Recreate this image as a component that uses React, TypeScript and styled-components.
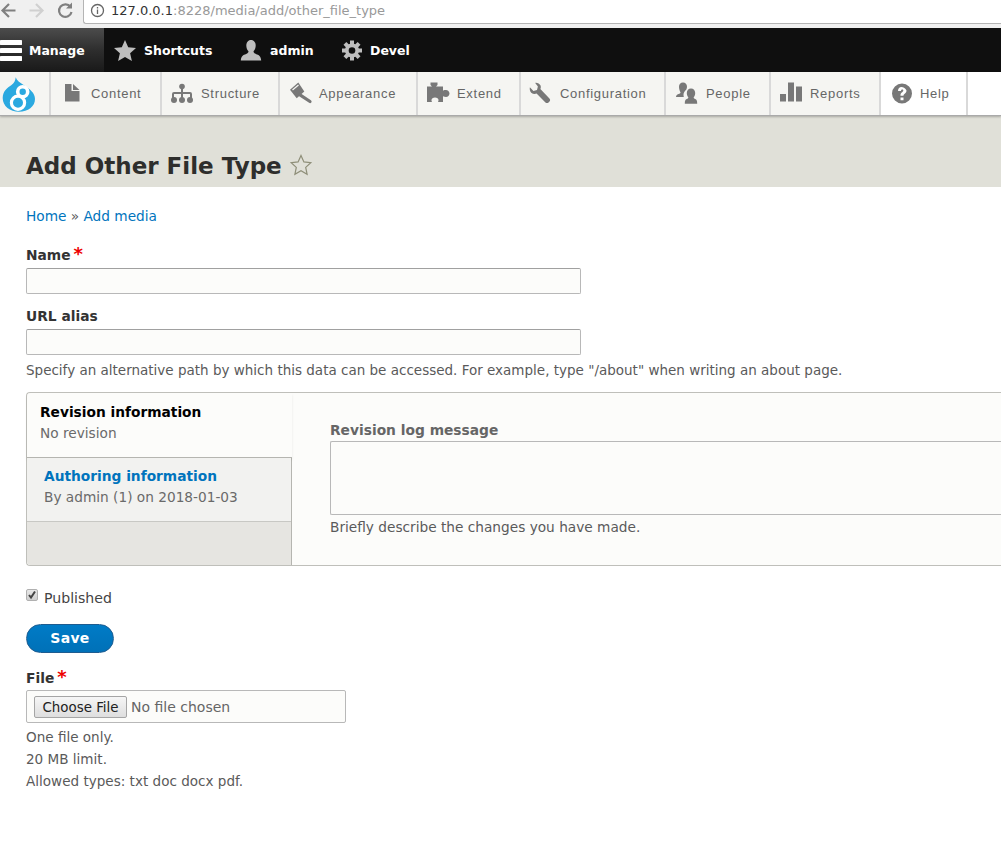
import React from "react";
import styled, { createGlobalStyle } from "styled-components";

const Global = createGlobalStyle`
  html, body {
    margin: 0;
    padding: 0;
    background: #fff;
    overflow: hidden;
  }
  body {
    width: 1001px;
    height: 855px;
    font-family: "DejaVu Sans", sans-serif;
    font-size: 14px;
    color: #5a5a5a;
  }
`;

const BrowserBar = styled.div`
  height: 28px;
  display: flex;
  background: #f0f0f0;
`;

const NavButtons = styled.div`
  width: 83px;
  height: 20px;
  padding-bottom: 3px;
  flex: none;
  display: flex;
  align-items: center;
  gap: 9px;
`;

const NavIcon = styled.svg<{ $off?: boolean }>`
  width: 19px;
  height: 19px;
  fill: none;
  stroke: ${p => (p.$off ? "#d0d0d0" : "#808080")};
  stroke-width: 2.2;
`;

const AddressBox = styled.div`
  flex: 1;
  height: 21px;
  padding: 0 0 2px 6px;
  background: #fff;
  border-left: 1px solid #b4b4b4;
  border-bottom: 1px solid #b4b4b4;
  border-bottom-left-radius: 3px;
  display: flex;
  align-items: center;
  gap: 6px;
  font-size: 13px;
  color: #999;
`;

const Host = styled.span`
  color: #333;
`;

const BlackBar = styled.div`
  height: 44px;
  background: #0f0f0f;
  display: flex;
  align-items: stretch;
  color: #fff;
  font-weight: bold;
  font-size: 12.5px;
`;

const BarTab = styled.div<{ $w: number; $active?: boolean }>`
  width: ${p => p.$w}px;
  display: flex;
  align-items: center;
  flex: none;
  background: ${p =>
    p.$active ? "linear-gradient(180deg, #4c4c4c 0%, #2e2e2e 50%, #191919 100%)" : "none"};
`;

const BarIcon = styled.svg<{ $gap: number; $left: number }>`
  width: 22px;
  height: 24px;
  margin-left: ${p => p.$left}px;
  margin-right: ${p => p.$gap}px;
  fill: #bebebe;
  flex: none;
`;

const Tray = styled.div`
  height: 43px;
  display: flex;
  background: #fff;
  border-bottom: 1px solid #aaa;
  box-shadow: 0 1px 2px rgba(0, 0, 0, 0.25);
  position: relative;
`;

const TrayTab = styled.div<{ $w: number; $white?: boolean }>`
  width: ${p => p.$w}px;
  flex: none;
  box-sizing: border-box;
  height: 43px;
  display: flex;
  align-items: center;
  background: ${p => (p.$white ? "#fff" : "#f5f5f2")};
  border-right: 2px solid #d9d9d9;
  font-family: "Liberation Sans", Arial, sans-serif;
  font-size: 13px;
  letter-spacing: 0.7px;
  color: #666;
`;

const Logo = styled.svg`
  width: 34px;
  height: 36px;
  margin-left: 2px;
`;

const TrayIcon = styled.svg<{ $left: number; $gap: number }>`
  width: 24px;
  height: 24px;
  margin-left: ${p => p.$left}px;
  margin-right: ${p => p.$gap}px;
  fill: #787878;
  flex: none;
`;

const Header = styled.div`
  height: 71px;
  box-sizing: border-box;
  background: #e0e0d8;
  padding: 36px 26px 0;
  display: flex;
  align-items: flex-start;
  gap: 7px;
`;

const Title = styled.h1`
  margin: 0;
  font-size: 23px;
  line-height: 29px;
  font-weight: bold;
  color: #2e2e2c;
`;

const StarIcon = styled.svg`
  width: 24px;
  height: 24px;
  margin-top: 1px;
  fill: none;
  stroke: #8e8e78;
  stroke-width: 1.2;
`;

const Main = styled.div`
  padding: 20px 0 0 26px;
`;

const Crumbs = styled.div`
  font-size: 13.7px;
  line-height: 18px;
`;

const Crumb = styled.a`
  color: #0074bd;
`;

const Label = styled.label<{ $top: number; $muted?: boolean }>`
  display: block;
  margin-top: ${p => p.$top}px;
  font-size: 13.8px;
  line-height: 18px;
  font-weight: bold;
  color: ${p => (p.$muted ? "#666" : "#333")};
`;

const Required = styled.span`
  color: #e00;
  font-size: 18px;
  line-height: 14px;
  margin-left: 3px;
  font-weight: bold;
`;

const TextInput = styled.div`
  box-sizing: border-box;
  width: 555px;
  height: 26px;
  margin-top: 4px;
  background: #fcfcfa;
  border: 1px solid #b8b8b8;
  border-top-color: #a0a0a0;
  border-radius: 2px;
`;

const Help = styled.div<{ $top?: number; $size?: number }>`
  margin-top: ${p => p.$top ?? 6}px;
  font-size: ${p => p.$size ?? 13.5}px;
  line-height: 18px;
`;

const Tabs = styled.div`
  box-sizing: border-box;
  height: 174px;
  margin-top: 13px;
  display: flex;
  background: #fcfcfa;
  border: 1px solid #bfbfba;
  border-right: none;
  border-radius: 4px 0 0 4px;
`;

const TabMenu = styled.div`
  box-sizing: border-box;
  width: 265px;
  flex: none;
  background: #e6e5e1;
  border-right: 1px solid #b5b5b0;
  border-radius: 4px 0 0 4px;
`;

const ActiveTab = styled.div`
  height: 65px;
  width: 265px;
  box-sizing: border-box;
  padding: 10px 13px;
  background: #fcfcfa;
  border-radius: 4px 0 0 0;
  border-bottom: 1px solid #b5b5b0;
  box-shadow: 0 2px 3px rgba(0, 0, 0, 0.08);
`;

const IdleTab = styled.div`
  height: 64px;
  box-sizing: border-box;
  padding: 9px 17px;
  background: #f2f2f0;
  border-bottom: 1px solid #c8c8c4;
`;

const TabTitle = styled.div<{ $link?: boolean }>`
  font-size: 13.75px;
  line-height: 18px;
  font-weight: bold;
  color: ${p => (p.$link ? "#0074bd" : "#000")};
`;

const TabSub = styled.div`
  margin-top: 3px;
  font-size: 13.7px;
  line-height: 18px;
  color: #6a6a6a;
`;

const TabPane = styled.div`
  flex: 1;
  padding: 28px 0 0 38px;
`;

const TextArea = styled.div`
  box-sizing: border-box;
  height: 74px;
  margin-top: 2px;
  background: #fcfcfa;
  border: 1px solid #b8b8b8;
  border-right: none;
  border-radius: 2px 0 0 2px;
`;

const CheckRow = styled.div`
  margin-top: 23px;
  display: flex;
  align-items: center;
  gap: 6px;
  height: 18px;
  font-size: 14.1px;
  color: #444;
`;

const Check = styled.span`
  width: 12px;
  height: 12px;
  margin-top: -6px;
  flex: none;
  box-sizing: border-box;
  border: 1px solid #b0b0b0;
  border-radius: 2px;
  background: linear-gradient(180deg, #e8e8e8, #cfcfcf);
  display: flex;
`;

const SaveButton = styled.button`
  display: block;
  box-sizing: border-box;
  width: 88px;
  height: 29px;
  margin-top: 17px;
  padding: 0 0 2px;
  border: 1px solid #1e5c90;
  border-radius: 20px;
  background: linear-gradient(180deg, #007bc6, #0071b8);
  color: #fff;
  font-family: "DejaVu Sans", sans-serif;
  font-size: 14px;
  font-weight: bold;
  letter-spacing: 0.3px;
`;

const FileBox = styled.div`
  box-sizing: border-box;
  width: 320px;
  height: 33px;
  margin-top: 3px;
  padding: 0 7px;
  display: flex;
  align-items: center;
  gap: 4px;
  background: #fcfcfa;
  border: 1px solid #b8b8b8;
  border-radius: 2px;
  font-size: 14px;
  color: #666;
`;

const ChooseButton = styled.div`
  box-sizing: border-box;
  width: 93px;
  height: 22px;
  padding-top: 1px;
  display: flex;
  align-items: center;
  justify-content: center;
  background: linear-gradient(180deg, #f6f6f6, #dedede);
  border: 1px solid #a5a5a5;
  border-radius: 2px;
  font-size: 13.4px;
  color: #222;
`;

const Notes = styled.div`
  margin-top: 3px;
  font-size: 13.55px;
  line-height: 22px;
`;

const GEAR_TEETH = [0, 45, 90, 135, 180, 225, 270, 315];

const App: React.FC = () => {
  return (
    <>
      <Global />
      <BrowserBar>
        <NavButtons>
          <NavIcon viewBox="0 0 19 19">
            <path d="M15.500 9.500H2.500M9 3L2.500 9.500 9 16" />
          </NavIcon>
          <NavIcon viewBox="0 0 19 19" $off>
            <path d="M1.500 9.500h13M8 3l6.500 6.500L8 16" />
          </NavIcon>
          <NavIcon viewBox="0 0 19 19">
            <path d="M14.500 6A6.300 6.300 0 1 0 15.500 11" />
            <path d="M16 1.500v6h-6z" fill="#808080" stroke="none" />
          </NavIcon>
        </NavButtons>
        <AddressBox>
          <svg width="15" height="15" viewBox="0 0 15 15" fill="none" stroke="#666" strokeWidth="1.3">
            <circle cx="7.500" cy="7.500" r="6" />
            <path d="M7.500 6.500v4.500M7.500 4v1.500" />
          </svg>
          <span>
            <Host>127.0.0.1</Host>:8228/media/add/other_file_type
          </span>
        </AddressBox>
      </BrowserBar>

      <BlackBar>
        <BarTab $w={104} $active>
          <BarIcon $left={0} $gap={7} viewBox="0 0 22 24">
            <path
              fill="#fff"
              d="M1.500 2h19a2.500 2.500 0 0 1 0 5h-19a2.500 2.500 0 0 1 0-5zM1.500 10h19a2.500 2.500 0 0 1 0 5h-19a2.500 2.500 0 0 1 0-5zM1.500 18h19a2.500 2.500 0 0 1 0 5h-19a2.500 2.500 0 0 1 0-5z"
            />
          </BarIcon>
          Manage
        </BarTab>
        <BarTab $w={136}>
          <BarIcon $left={10} $gap={8} viewBox="0 0 22 24">
            <path d="M11 2l3.200 7.300 7.800.7-5.900 5.200 1.800 7.800-6.900-4.100-6.900 4.100 1.800-7.800L0 10l7.800-.7z" />
          </BarIcon>
          Shortcuts
        </BarTab>
        <BarTab $w={101}>
          <BarIcon $left={0} $gap={8} viewBox="0 0 22 24">
            <path d="M11 2c3 0 4.700 2.500 4.700 5.500 0 2.500-1 4.600-2.200 5.800.1 1.400.7 2 2.400 2.600 3 1 4.900 2 5.300 6.600H.8c.4-4.600 2.300-5.600 5.300-6.600 1.700-.6 2.300-1.200 2.400-2.600C7.300 12.100 6.300 10 6.300 7.500 6.300 4.500 8 2 11 2z" />
          </BarIcon>
          admin
        </BarTab>
        <BarTab $w={100}>
          <BarIcon $left={0} $gap={7} viewBox="0 0 22 24">
            {GEAR_TEETH.map(a => (
              <rect key={a} x="9" y="2.500" width="4" height="5" transform={`rotate(${a} 11 12.500)`} />
            ))}
            <circle cx="11" cy="12.500" r="7" />
            <circle cx="11" cy="12.500" r="3.300" fill="#0f0f0f" />
          </BarIcon>
          Devel
        </BarTab>
      </BlackBar>

      <Tray>
        <TrayTab $w={51}>
          <Logo viewBox="0 0 34 36">
            <path
              fill="#2ba9e0"
              d="M13.700 1.200c1 3.500 4 5 8.300 8C27.500 13 33 16.500 33 23c0 7.500-7 12.800-16 12.800S.7 30 .7 22C.7 14.500 6 11.500 9.500 9c2.500-2 4-4.500 4.200-7.800z"
            />
            <circle cx="20.700" cy="15.800" r="5" fill="#2ba9e0" stroke="#fff" strokeWidth="3.600" />
            <circle cx="16" cy="26.800" r="6.600" fill="#2ba9e0" stroke="#fff" strokeWidth="3.200" />
          </Logo>
        </TrayTab>
        <TrayTab $w={111}>
          <TrayIcon $left={12} $gap={4} viewBox="0 0 24 24">
            <path d="M2 2h6.500v7h8v10.500H2zM10 2l6.500 6H10z" />
          </TrayIcon>
          Content
        </TrayTab>
        <TrayTab $w={118}>
          <TrayIcon $left={9} $gap={6} viewBox="0 0 24 24">
            <circle cx="11" cy="4.500" r="2.800" />
            <circle cx="3" cy="18" r="3" />
            <circle cx="11" cy="18" r="3" />
            <circle cx="19" cy="18" r="3" />
            <path d="M10 6h2v4h7a2 2 0 0 1 2 2v4h-2v-4h-7v4h-2v-4H3v4H1v-4a2 2 0 0 1 2-2h7z" />
          </TrayIcon>
          Structure
        </TrayTab>
        <TrayTab $w={138}>
          <TrayIcon $left={9} $gap={6} viewBox="0 0 24 24">
            <path d="M1 7.800L9.300.5l6 9-7.600 6.700z" />
            <path d="M3.500 8l6-5" stroke="#f5f5f2" strokeWidth="1.200" fill="none" />
            <path d="M11 12.800l10 6.700" stroke="#787878" strokeWidth="3.200" fill="none" strokeLinecap="round" />
          </TrayIcon>
          Appearance
        </TrayTab>
        <TrayTab $w={103}>
          <TrayIcon $left={9} $gap={6} viewBox="0 0 24 24">
            <path d="M3.500.5h7V3L9 4.500h7v4.200c1-.7 2-.7 3-.7 1.800 0 3.500 1.700 3.500 3.500S20.800 15 19 15c-1 0-2-.2-3-.7V20h-5c.5-1 .5-1.500.5-2 0-1.500-1.500-2.500-3.500-2.500S4.500 16.500 4.500 18c0 .5 0 1 .5 2H0V4.500h5L3.500 3z" />
          </TrayIcon>
          Extend
        </TrayTab>
        <TrayTab $w={145}>
          <TrayIcon $left={8} $gap={7} viewBox="0 0 27 27">
            <path d="M7 1c2-.5 5 1 6 3 .5 1.500.3 3-.2 4L23 18.500c1 1 1 2.500 0 3.500l-1 1c-1 1-2.500 1-3.500 0L8.500 13c-2 .8-4 .5-6-1C1 10.500.5 8 1 6l4 4 4-1 1-4z" />
          </TrayIcon>
          Configuration
        </TrayTab>
        <TrayTab $w={105}>
          <TrayIcon $left={9} $gap={7} viewBox="0 0 24 24">
            <path d="M8 .5c2.500 0 4 1.800 4 4.200 0 1-.3 2-.8 3-1.500 1-2.700 3-2.700 5 0 .7.1 1.300.3 2.300H1c0-1.500.8-2.500 2.500-3 1.500-.5 2-.8 2-1.800C4.700 9 4 6.800 4 4.700 4 2.300 5.500.5 8 .5z" />
            <path d="M16 6.500c2.500 0 4.200 2 4.200 4.500 0 1.800-.7 3.300-1.500 4.300 0 1 .5 1.300 1.500 1.700 1.500.6 2 1.500 2 4.800H9.800c0-3.300.5-4.200 2-4.800 1-.4 1.500-.7 1.500-1.700-.8-1-1.500-2.500-1.500-4.300 0-2.500 1.700-4.500 4.200-4.500z" />
          </TrayIcon>
          People
        </TrayTab>
        <TrayTab $w={110}>
          <TrayIcon $left={8} $gap={7} viewBox="0 0 24 24">
            <path d="M1 12h6v7.500H1zM9 .5h6v19H9zM17 4.500h6v15h-6z" />
          </TrayIcon>
          Reports
        </TrayTab>
        <TrayTab $w={87} $white>
          <TrayIcon $left={9} $gap={6} viewBox="0 0 24 24">
            <path
              fillRule="evenodd"
              d="M12 1.500a10 10 0 1 1 0 20 10 10 0 0 1 0-20zM8 9h3c0-1 .4-1.500 1.200-1.500.7 0 1.100.4 1.100 1 0 1.500-2.800 2-2.800 4.500v.8h3v-.3c0-1.500 3-2.200 3-5C15.500 6.300 13.600 5 11.300 5 9.600 5 8 6.500 8 9zM10.500 15.500v2.800h3v-2.800z"
            />
          </TrayIcon>
          Help
        </TrayTab>
      </Tray>

      <Header>
        <Title>Add Other File Type</Title>
        <StarIcon viewBox="0 0 24 24">
          <path d="M12 2.500l2.900 6.400 6.900.8-5.100 4.700 1.400 6.900-6.100-3.500-6.100 3.500 1.400-6.900-5.100-4.700 6.900-.8z" />
        </StarIcon>
      </Header>

      <Main>
        <Crumbs>
          <Crumb>Home</Crumb> » <Crumb>Add media</Crumb>
        </Crumbs>
        <Label $top={21}>
          Name<Required>*</Required>
        </Label>
        <TextInput />
        <Label $top={13}>URL alias</Label>
        <TextInput />
        <Help>Specify an alternative path by which this data can be accessed. For example, type "/about" when writing an about page.</Help>

        <Tabs>
          <TabMenu>
            <ActiveTab>
              <TabTitle>Revision information</TabTitle>
              <TabSub>No revision</TabSub>
            </ActiveTab>
            <IdleTab>
              <TabTitle $link>Authoring information</TabTitle>
              <TabSub>By admin (1) on 2018-01-03</TabSub>
            </IdleTab>
          </TabMenu>
          <TabPane>
            <Label $top={0} $muted>
              Revision log message
            </Label>
            <TextArea />
            <Help $top={3} $size={13.7}>
              Briefly describe the changes you have made.
            </Help>
          </TabPane>
        </Tabs>

        <CheckRow>
          <Check>
            <svg width="10" height="10" viewBox="0 0 10 10" fill="none" stroke="#444" strokeWidth="2">
              <path d="M2 5l2 2.500L8 1.500" />
            </svg>
          </Check>
          Published
        </CheckRow>
        <SaveButton>Save</SaveButton>
        <Label $top={16}>
          File<Required>*</Required>
        </Label>
        <FileBox>
          <ChooseButton>Choose File</ChooseButton>
          No file chosen
        </FileBox>
        <Notes>
          One file only.
          <br />
          20 MB limit.
          <br />
          Allowed types: txt doc docx pdf.
        </Notes>
      </Main>
    </>
  );
};

export default App;
